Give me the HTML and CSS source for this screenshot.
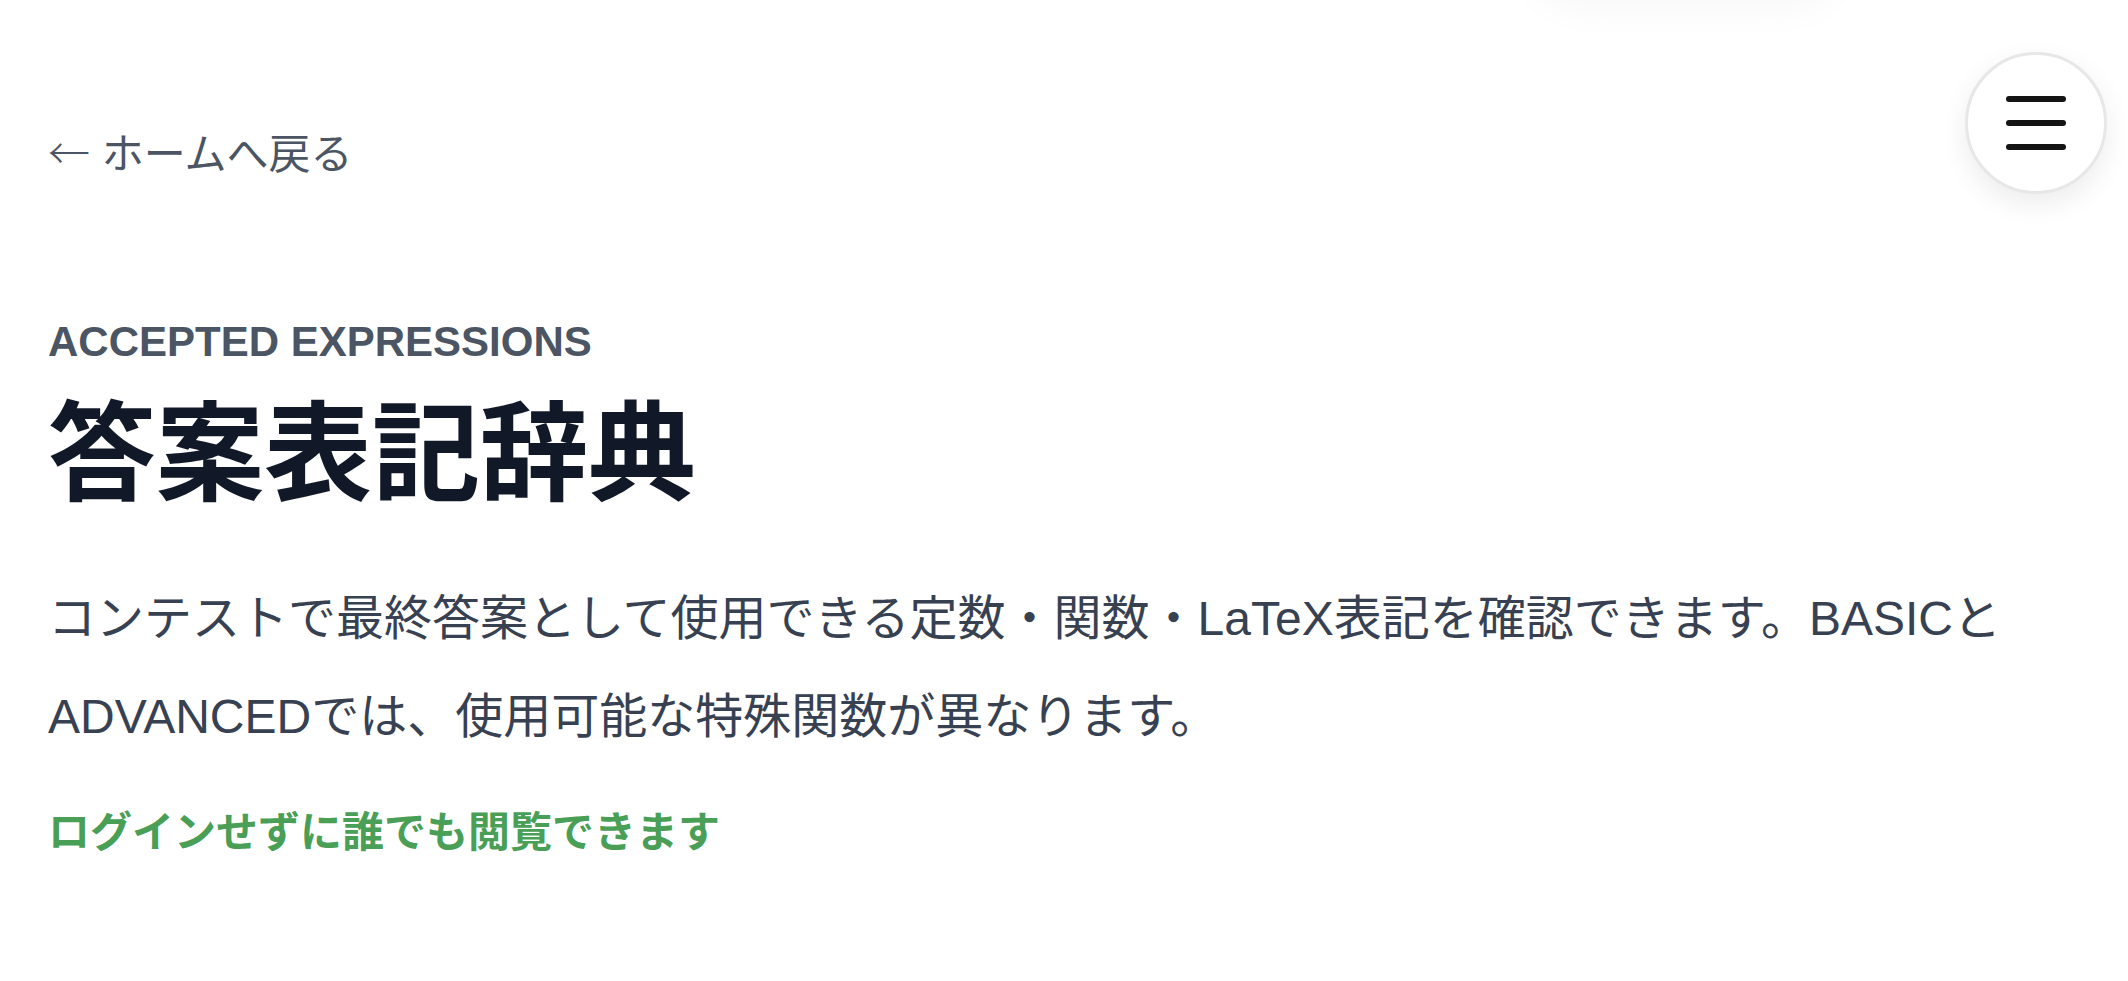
FILE: index.html
```html
<!DOCTYPE html>
<html lang="ja">
<head>
<meta charset="utf-8">
<title>答案表記辞典</title>
<link rel="stylesheet" href="styles.css">
</head>
<body>
<div class="top-glow" aria-hidden="true"></div>
<button class="menu-btn" aria-label="メニュー">
  <span class="bar"></span>
  <span class="bar"></span>
  <span class="bar"></span>
</button>
<main class="page">
  <a class="back-link" href="#"><span class="arrow">←</span> ホームへ戻る</a>
  <p class="eyebrow">ACCEPTED EXPRESSIONS</p>
  <h1 class="title">答案表記辞典</h1>
  <p class="lead">コンテストで最終答案として使用できる定数・関数・LaTeX表記を確認できます。BASICとADVANCEDでは、使用可能な特殊関数が異なります。</p>
  <p class="note">ログインせずに誰でも閲覧できます</p>
</main>
</body>
</html>
```
FILE: styles.css
```css
html, body {
  margin: 0;
  padding: 0;
  background: #ffffff;
}
body {
  font-family: "Liberation Sans", "Noto Sans CJK JP", sans-serif;
  overflow: hidden;
  height: 981px;
  position: relative;
}
.top-glow {
  position: absolute;
  top: -110px;
  left: 1530px;
  width: 310px;
  height: 100px;
  border-radius: 50px;
  background: #fff;
  box-shadow: 0 18px 40px rgba(0, 0, 0, 0.035);
}
.menu-btn {
  position: absolute;
  top: 52px;
  right: 21px;
  width: 142px;
  height: 142px;
  box-sizing: border-box;
  border-radius: 50%;
  border: 3px solid #e7e7e7;
  background: #ffffff;
  box-shadow: 0 10px 28px rgba(0, 0, 0, 0.08);
  padding: 0;
  display: flex;
  flex-direction: column;
  align-items: center;
  justify-content: center;
  gap: 18px;
  cursor: pointer;
}
.menu-btn .bar {
  display: block;
  width: 60px;
  height: 6px;
  border-radius: 3px;
  background: #141414;
}
.page {
  padding: 123px 48px 0 48px;
  max-width: 2000px;
}
.back-link {
  display: block;
  height: 63px;
  font-size: 42px;
  line-height: 63px;
  color: #4b5563;
  text-decoration: none;
}
.back-link .arrow {
  font-family: "Noto Sans CJK JP", sans-serif;
  font-weight: 300;
  line-height: 1;
}
.eyebrow {
  margin: 124px 0 0 0;
  font-size: 42px;
  line-height: 63px;
  font-weight: 700;
  color: #4b5563;
}
.title {
  margin: 14px 0 0 0;
  font-size: 108px;
  line-height: 135px;
  font-weight: 700;
  color: #111827;
}
.lead {
  margin: 48px 0 0 0;
  font-size: 48px;
  line-height: 98px;
  color: #374151;
}
.note {
  margin: 35px 0 0 0;
  font-size: 42px;
  line-height: 63px;
  font-weight: 700;
  color: #4a9f57;
}
```
